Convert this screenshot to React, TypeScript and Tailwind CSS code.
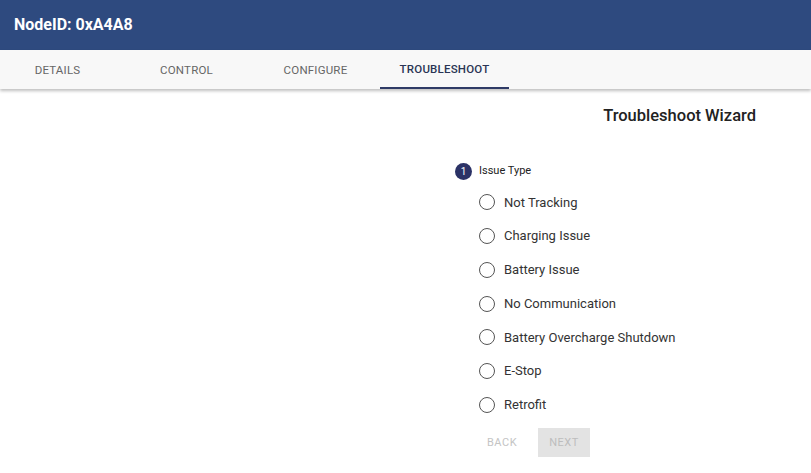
const tabs = ["DETAILS", "CONTROL", "CONFIGURE", "TROUBLESHOOT"];
const options = [
  "Not Tracking",
  "Charging Issue",
  "Battery Issue",
  "No Communication",
  "Battery Overcharge Shutdown",
  "E-Stop",
  "Retrofit",
];

export default function App() {
  return (
    <div className="h-[473px] w-[811px] overflow-hidden bg-white font-['Roboto',sans-serif] text-[#333]">
      <header className="flex h-[50px] items-center bg-[#2e4a7f] px-[14px]">
        <h1 className="text-[16px] font-bold text-white">NodeID: 0xA4A8</h1>
      </header>
      <nav className="relative flex h-[39px] bg-[#f8f8f8] shadow-[0_2px_3px_rgba(0,0,0,0.25)]">
        <div className="ml-[-7px] flex">
          {tabs.map((t, i) => (
            <div
              key={t}
              className={`flex w-[129px] items-center justify-center pt-[3px] text-[11.5px] tracking-[0.2px] ${
                i === 3 ? "border-b-2 border-[#2e3a66] font-medium text-[#2a3555]" : "text-[#666]"
              }`}
            >
              {t}
            </div>
          ))}
        </div>
      </nav>
      <main className="flex flex-col">
        <div className="flex justify-end pr-[55px] pt-[15px]">
          <h2 className="text-[16.5px] font-medium text-[#222]">Troubleshoot Wizard</h2>
        </div>
        <div className="ml-[455px] mt-[34px] flex flex-col">
          <div className="flex items-center gap-[7px]">
            <span className="flex h-[17px] w-[17px] items-center justify-center rounded-full bg-[#2b3266] text-[10px] text-white">
              1
            </span>
            <span className="text-[11px] text-[#222]">Issue Type</span>
          </div>
          <ul className="ml-[24px] mt-[13px] flex flex-col gap-[14.8px]">
            {options.map((o) => (
              <li key={o} className="flex h-[19px] items-center gap-[9px]">
                <span className="h-[16px] w-[16px] rounded-full border-[1.5px] border-[#555]" />
                <span className="text-[13px] text-[#333]">{o}</span>
              </li>
            ))}
          </ul>
          <div className="ml-[22px] mt-[12px] flex items-center gap-[11px]">
            <button className="px-[10px] py-[8px] text-[11px] tracking-[0.5px] text-[#c4c4c4]">BACK</button>
            <button className="h-[29px] w-[52px] bg-[#e3e3e3] text-[11px] tracking-[0.5px] text-[#bdbdbd]">
              NEXT
            </button>
          </div>
        </div>
      </main>
    </div>
  );
}
